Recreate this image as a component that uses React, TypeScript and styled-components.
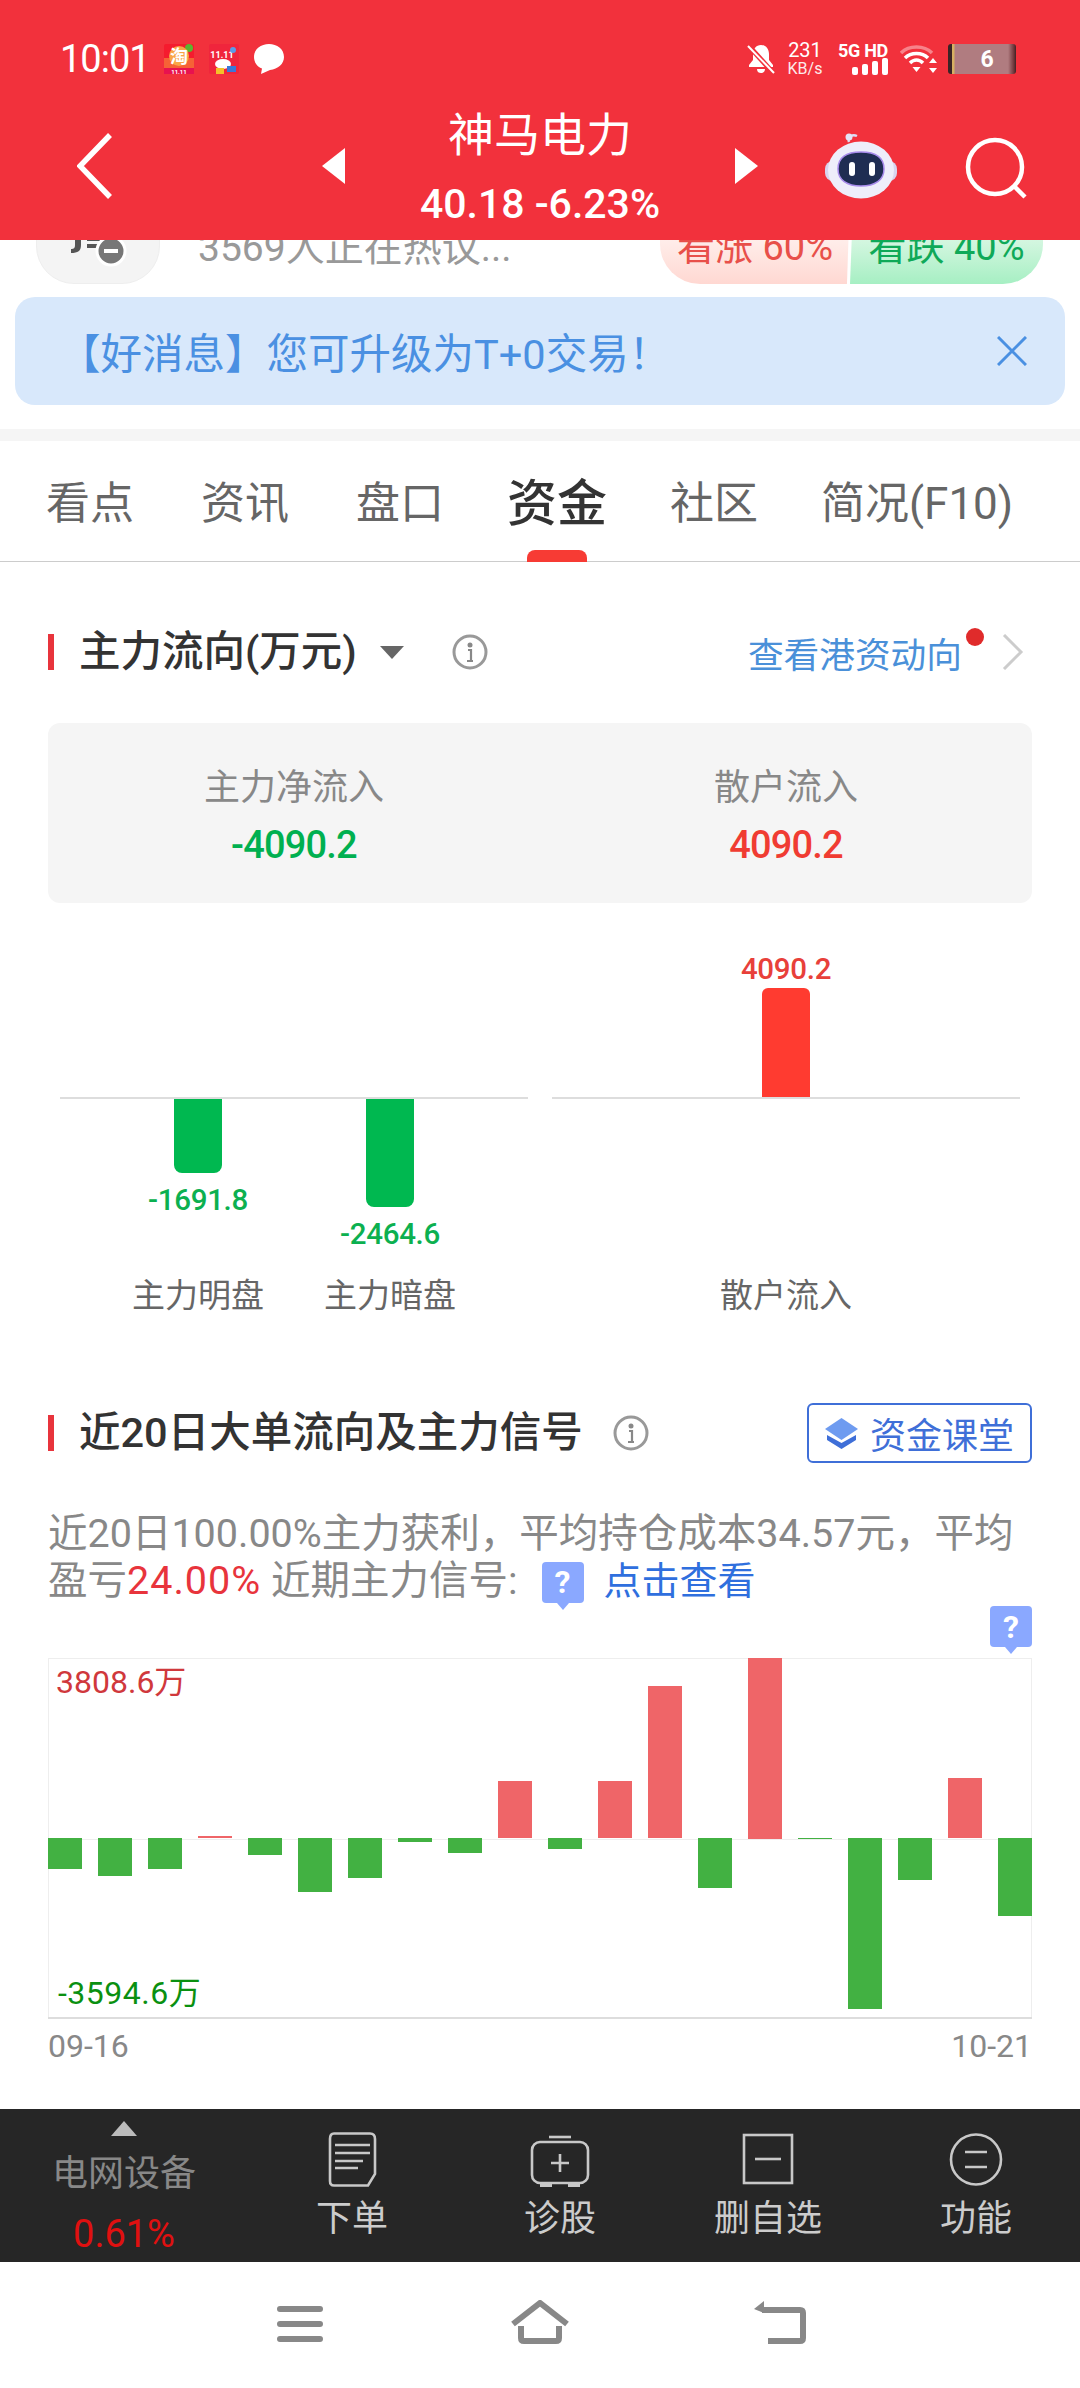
import React from "react";
import styled, { createGlobalStyle } from "styled-components";

const GlobalStyle = createGlobalStyle`
  html, body {
    margin: 0;
    padding: 0;
    background: #fff;
  }
  * {
    box-sizing: border-box;
  }
  body {
    font-family: Roboto, "Noto Sans CJK SC", sans-serif;
  }
`;

const Page = styled.div`
  width: 1080px;
  height: 2388px;
  display: flex;
  flex-direction: column;
  overflow: hidden;
  background: #fff;
`;

const Header = styled.header`
  height: 240px;
  flex: none;
  background: #f2313c;
  color: #fff;
`;

const StatusBar = styled.div`
  height: 118px;
  display: flex;
  align-items: center;
  padding: 0 64px 0 60px;
`;

const Clock = styled.span`
  font-size: 38px;
  letter-spacing: -1px;
  line-height: 40px;
  width: 104px;
`;

const StatusIcons = styled.div`
  display: flex;
  gap: 15px;
`;

const StatusRight = styled.div`
  margin-left: auto;
  display: flex;
  align-items: center;
`;

const Speed = styled.div`
  width: 34px;
  margin: 0 18px 0 13px;
  display: flex;
  flex-direction: column;
  align-items: center;
  font-size: 20px;
  line-height: 17px;
  small {
    font-size: 16px;
    line-height: 15px;
    margin-top: 2px;
    white-space: nowrap;
    opacity: 0.9;
  }
`;

const Net = styled.div`
  width: 48px;
  margin-right: 12px;
  display: flex;
  flex-direction: column;
  align-items: flex-end;
  font-size: 18px;
  font-weight: 700;
  line-height: 15px;
  white-space: nowrap;
  span {
    letter-spacing: -0.3px;
  }
`;

const Battery = styled.div`
  width: 68px;
  height: 30px;
  margin-left: 11px;
  border-radius: 3px;
  display: flex;
  align-items: center;
  justify-content: center;
  padding-left: 10px;
  font-size: 23px;
  font-weight: 700;
  background: linear-gradient(90deg, #3a2426 0, #3a2426 4px, #d7b062 4px, #d7b062 6px, #b07c80 7px, #b07c80 60px, #6d3438 66px, #3a2426 68px);
`;

const NavRow = styled.div`
  height: 122px;
  display: flex;
  align-items: center;
  padding: 0 0 26px 77px;
`;

const BackButton = styled.svg`
  width: 36px;
  height: 66px;
  margin-right: 209px;
`;

const Arrow = styled.i<{ $dir: "left" | "right" }>`
  width: 0;
  height: 0;
  flex: none;
  border-top: 18px solid transparent;
  border-bottom: 18px solid transparent;
  ${(p) => (p.$dir === "left" ? "border-right: 23px solid #fff;" : "border-left: 23px solid #fff;")}
`;

const Ticker = styled.div`
  width: 390px;
  flex: none;
  display: flex;
  flex-direction: column;
  align-items: center;
  gap: 20px;
  margin-top: 2px;
`;

const TickerName = styled.div`
  font-size: 46px;
  line-height: 54px;
  font-weight: 400;
`;

const TickerPrice = styled.div`
  font-size: 41px;
  line-height: 44px;
  font-weight: 500;
`;

const Robot = styled.div`
  width: 72px;
  height: 66px;
  margin-left: 67px;
  svg {
    display: block;
    width: 100%;
    height: 100%;
  }
`;

const SearchIcon = styled.svg`
  width: 62px;
  height: 62px;
  margin-left: 68px;
  margin-top: 4px;
`;

const PeekStrip = styled.div`
  height: 44px;
  flex: none;
  display: flex;
  align-items: flex-end;
  padding: 0 37px 0 36px;
  overflow: hidden;
`;

const PeekIcon = styled.div`
  width: 124px;
  height: 90px;
  flex: none;
  border-radius: 38px;
  background: #f4f4f4;
  border: 1px solid #eeeeee;
  display: flex;
  align-items: flex-end;
  justify-content: center;
  padding-bottom: 16px;
`;

const PeekText = styled.span`
  margin: 0 0 14px 38px;
  font-size: 39px;
  line-height: 44px;
  color: #999;
  white-space: nowrap;
`;

const Vote = styled.div`
  margin-left: auto;
  width: 383px;
  height: 90px;
  flex: none;
  display: flex;
  border-radius: 40px;
  overflow: hidden;
`;

const VoteSide = styled.div<{ $up?: boolean }>`
  height: 100%;
  display: flex;
  align-items: center;
  justify-content: center;
  padding-top: 8px;
  font-size: 38px;
  white-space: nowrap;
  ${(p) =>
    p.$up
      ? `width: 190px;
         color: #e8504a;
         background: linear-gradient(#fff2ef 40%, #ffd8d2);
         clip-path: polygon(0 0, 100% 0, 98.4% 100%, 0 100%);`
      : `width: 193px;
         color: #0fa958;
         background: linear-gradient(#dff8e7 40%, #a6efc3);
         clip-path: polygon(1.8% 0, 100% 0, 100% 100%, 0 100%);`}
`;

const Banner = styled.div`
  height: 108px;
  flex: none;
  margin: 13px 15px 0;
  border-radius: 20px;
  background: #d8e8fb;
  display: flex;
  align-items: center;
  justify-content: space-between;
  padding: 0 38px 0 44px;
  color: #4a90e2;
  font-size: 41.5px;
`;

const GrayBand = styled.div`
  height: 12px;
  flex: none;
  margin-top: 24px;
  background: #f5f5f5;
`;

const Tabs = styled.nav`
  height: 121px;
  flex: none;
  display: flex;
  align-items: center;
  gap: 67px;
  padding: 5px 0 0 46px;
  border-bottom: 1px solid #ccc;
  font-size: 44px;
  color: #666;
`;

const Tab = styled.span<{ $active?: boolean }>`
  position: relative;
  line-height: 50px;
  white-space: nowrap;
  &:last-child {
    margin-left: -4px;
  }
  ${(p) =>
    p.$active &&
    `font-size: 50px;
     font-weight: 500;
     color: #333;
     margin: 0 -4px;
     &::after {
       content: "";
       position: absolute;
       left: 50%;
       bottom: -33px;
       width: 60px;
       height: 12px;
       margin-left: -30px;
       border-radius: 8px 8px 0 0;
       background: #f73b34;
     }`}
`;

const Body = styled.main`
  flex: 1;
  padding: 0 48px;
`;

const SectionHead = styled.div<{ $first?: boolean }>`
  height: 60px;
  display: flex;
  align-items: center;
  margin-top: ${(p) => (p.$first ? "60px" : "85px")};
`;

const Mark = styled.i`
  width: 6px;
  height: 36px;
  flex: none;
  background: #e8343c;
  margin-right: 25px;
`;

const SectionTitle = styled.h2`
  margin: 0;
  font-size: 41.5px;
  line-height: 50px;
  font-weight: 500;
  color: #333;
  white-space: nowrap;
`;

const Caret = styled.i`
  width: 0;
  height: 0;
  margin-left: 23px;
  border-left: 12px solid transparent;
  border-right: 12px solid transparent;
  border-top: 13px solid #666;
`;

const InfoIcon = styled.svg<{ $gap: number }>`
  width: 36px;
  height: 36px;
  flex: none;
  margin-left: ${(p) => p.$gap}px;
`;

const MoreLink = styled.a`
  margin-left: auto;
  position: relative;
  display: flex;
  align-items: center;
  font-size: 35.7px;
  color: #4a90d9;
  white-space: nowrap;
  padding-right: 8px;
  &::after {
    content: "";
    position: absolute;
    right: -14px;
    top: 1px;
    width: 18px;
    height: 18px;
    border-radius: 50%;
    background: #e02b2b;
  }
`;

const Chevron = styled.svg`
  width: 22px;
  height: 36px;
  margin: 0 8px 0 32px;
`;

const StatsBox = styled.div`
  height: 180px;
  margin-top: 41px;
  border-radius: 12px;
  background: #f5f5f5;
  display: grid;
  grid-template-columns: 492px 492px;
  padding-top: 43px;
`;

const Stat = styled.div`
  display: flex;
  flex-direction: column;
  align-items: center;
`;

const StatLabel = styled.span`
  font-size: 36px;
  line-height: 44px;
  color: #888;
`;

const StatValue = styled.span<{ $up?: boolean }>`
  margin-top: 13px;
  font-size: 38px;
  line-height: 44px;
  font-weight: 500;
  letter-spacing: -0.8px;
  color: ${(p) => (p.$up ? "#f03c32" : "#00b050")};
`;

const FlowCharts = styled.div`
  margin: 51px 12px 0;
  display: grid;
  grid-template-columns: 468px 468px;
  gap: 24px;
`;

const FlowPanel = styled.div<{ $cols: number }>`
  display: grid;
  grid-template-columns: repeat(${(p) => p.$cols}, 192px);
  grid-template-rows: 143px 2px 175px 44px;
  justify-content: center;
`;

const FlowRule = styled.div`
  grid-column: 1 / -1;
  width: 468px;
  justify-self: center;
  background: #ddd;
`;

const FlowUp = styled.div`
  display: flex;
  flex-direction: column;
  justify-content: flex-end;
  align-items: center;
`;

const FlowDown = styled.div`
  display: flex;
  flex-direction: column;
  align-items: center;
`;

const FlowBar = styled.div<{ $up?: boolean; $h: number }>`
  width: 48px;
  height: ${(p) => p.$h}px;
  background: ${(p) => (p.$up ? "#ff3b30" : "#00b850")};
  border-radius: ${(p) => (p.$up ? "6px 6px 0 0" : "0 0 8px 8px")};
`;

const FlowValue = styled.span<{ $up?: boolean }>`
  font-size: 29.5px;
  line-height: 30px;
  font-weight: 500;
  letter-spacing: -0.3px;
  color: ${(p) => (p.$up ? "#e8403a" : "#0cb050")};
  margin: ${(p) => (p.$up ? "0 0 4px" : "12px 0 0")};
`;

const FlowName = styled.span`
  text-align: center;
  font-size: 33px;
  line-height: 44px;
  color: #666;
`;

const CourseButton = styled.a`
  margin-left: auto;
  width: 225px;
  height: 60px;
  display: flex;
  align-items: center;
  justify-content: center;
  gap: 12px;
  border: 2px solid #3f6fd8;
  border-radius: 6px;
  color: #3f6fd8;
  font-size: 36px;
  white-space: nowrap;
`;

const Summary = styled.p`
  margin: 47px 0 0;
  font-size: 39.5px;
  line-height: 47px;
  color: #888;
  white-space: nowrap;
  em {
    font-style: normal;
    color: #e8343c;
    letter-spacing: 1px;
  }
  a {
    color: #2f6fde;
    font-size: 38px;
  }
`;

const QuestionFlag = styled.span<{ $inline?: boolean }>`
  position: relative;
  display: inline-flex;
  align-items: center;
  justify-content: center;
  width: 42px;
  height: 41px;
  border-radius: 4px;
  background: #8aa8ff;
  color: #fff;
  font-size: 32px;
  font-weight: 700;
  line-height: 1;
  ${(p) => p.$inline && "margin: 0 20px 0 24px; vertical-align: 1px;"}
  &::after {
    content: "";
    position: absolute;
    left: 50%;
    bottom: -7px;
    margin-left: -6px;
    border-left: 6px solid transparent;
    border-right: 6px solid transparent;
    border-top: 7px solid #8aa8ff;
  }
`;

const FlagRow = styled.div`
  height: 52px;
  margin-top: 1px;
  display: flex;
  justify-content: flex-end;
`;

const SignalChart = styled.div`
  position: relative;
  height: 361px;
  display: flex;
  justify-content: space-between;
  border-top: 1px solid #eee;
  border-bottom: 2px solid #ddd;
  box-shadow: inset 1px 0 #eee, inset -1px 0 #eee;
  &::before {
    content: "";
    position: absolute;
    left: 0;
    right: 0;
    top: 180px;
    height: 1px;
    background: #eee;
  }
`;

const SignalColumn = styled.div`
  position: relative;
  width: 34px;
  display: flex;
  flex-direction: column;
`;

const SignalHalf = styled.div<{ $up?: boolean }>`
  height: 180px;
  display: flex;
  align-items: ${(p) => (p.$up ? "flex-end" : "flex-start")};
`;

const SignalBar = styled.div<{ $up?: boolean }>`
  width: 100%;
  background: ${(p) => (p.$up ? "#ef6568" : "#42b142")};
`;

const ChartLabel = styled.span<{ $up?: boolean }>`
  position: absolute;
  white-space: nowrap;
  font-size: 32px;
  line-height: 34px;
  ${(p) =>
    p.$up
      ? "left: 8px; top: 6px; color: #d0383c;"
      : "left: 10px; bottom: 7px; color: #0a9010; letter-spacing: 0.5px;"}
`;

const DateRow = styled.div`
  margin-top: 9px;
  display: flex;
  justify-content: space-between;
  font-size: 32px;
  line-height: 36px;
  color: #888;
`;

const Dock = styled.div`
  height: 153px;
  flex: none;
  background: #262626;
  display: grid;
  grid-template-columns: 248px repeat(4, 208px);
`;

const SectorCell = styled.div`
  display: flex;
  flex-direction: column;
  align-items: center;
  padding-top: 12px;
`;

const SectorArrow = styled.i`
  width: 0;
  height: 0;
  border-left: 13px solid transparent;
  border-right: 13px solid transparent;
  border-bottom: 15px solid #bbb;
`;

const SectorName = styled.span`
  margin-top: 16px;
  font-size: 36px;
  line-height: 44px;
  color: #888;
`;

const SectorChange = styled.span`
  margin-top: 16px;
  font-size: 38px;
  line-height: 44px;
  color: #e01010;
`;

const DockAction = styled.div`
  display: flex;
  flex-direction: column;
  align-items: center;
  padding-top: 23px;
  color: #ccc;
  font-size: 36px;
  line-height: 40px;
  svg {
    width: 60px;
    height: 55px;
    margin-bottom: 12px;
    fill: none;
    stroke: #c8c8c8;
    stroke-width: 2.6;
  }
`;

const SystemNav = styled.div`
  height: 126px;
  flex: none;
  display: grid;
  grid-template-columns: repeat(3, 240px);
  justify-content: center;
  padding-top: 38px;
  svg {
    justify-self: center;
    width: 60px;
    height: 44px;
    fill: none;
    stroke: #888;
    stroke-width: 6;
  }
`;

const bars = [
  -31, -38, -31, 2, -17, -54, -40, -4, -15, 57, -11, 57, 152, -50, 181, -1, -171, -42, 60, -78,
];

function TaoIcon() {
  return (
    <svg width="30" height="30" viewBox="0 0 30 30">
      <rect width="30" height="30" rx="2" fill="#f51b2e" />
      <rect y="14" width="30" height="10" fill="#f7803a" opacity=".7" />
      <circle cx="25" cy="4" r="4" fill="#5cb531" />
      <circle cx="15" cy="12" r="10" fill="#f9a546" />
      <text x="15" y="19" textAnchor="middle" fontSize="18" fontWeight="700" fill="#fff">淘</text>
      <rect y="24" width="30" height="6" fill="#e8124f" />
      <text x="15" y="29.5" textAnchor="middle" fontSize="6" fontWeight="700" fill="#fff">11.11</text>
    </svg>
  );
}

function RabbitIcon() {
  return (
    <svg width="30" height="30" viewBox="0 0 30 30">
      <rect width="30" height="30" rx="2" fill="#f0253c" />
      <text x="13" y="14" textAnchor="middle" fontSize="9" fontWeight="700" fill="#fff">11.11</text>
      <ellipse cx="14" cy="20" rx="8" ry="5" fill="#fff" />
      <circle cx="24" cy="6" r="3" fill="#5a9be8" />
      <rect x="7" y="24" width="8" height="6" fill="#f5c02a" />
      <rect x="18" y="22" width="9" height="6" fill="#3a78d8" />
    </svg>
  );
}

function ChatIcon() {
  return (
    <svg width="30" height="30" viewBox="0 0 30 30">
      <path d="M15 0C23 0 30 5 30 13c0 7-6 12-14 13l-9 4 1-5.500C3 23 0 18 0 13 0 5 7 0 15 0Z" fill="#fff" />
    </svg>
  );
}

function BellOffIcon() {
  return (
    <svg width="28" height="30" viewBox="0 0 28 30">
      <path d="M14 1c5 0 8 4 8 9v6l4 5v2H2v-2l4-5v-6c0-5 3-9 8-9Z M10 25h8c0 3-2 4-4 4s-4-1-4-4Z" fill="#fff" />
      <path d="M1 1 L27 30" stroke="#f2313c" strokeWidth="5" />
      <path d="M1 2 L27 29" stroke="#fff" strokeWidth="2" />
    </svg>
  );
}

function SignalIcon() {
  return (
    <svg width="36" height="17" viewBox="0 0 36 17" fill="#fff">
      <rect x="0" y="9" width="6" height="8" rx="2" />
      <rect x="10" y="6" width="6" height="11" rx="2" />
      <rect x="20" y="3" width="6" height="14" rx="2" />
      <rect x="30" y="0" width="6" height="17" rx="2" />
    </svg>
  );
}

function WifiIcon() {
  return (
    <svg width="37" height="30" viewBox="0 0 37 30" fill="none" stroke="#fff">
      <path d="M1 9C9 1 24 1 32 9" stroke="#fff" strokeOpacity=".4" strokeWidth="3.500" />
      <path d="M5 14C11 8 22 8 28 14" strokeWidth="3.500" />
      <path d="M10 19C14 15 19 15 23 19" strokeWidth="3.500" />
      <path d="M12.500 23h8l-4 5Z" fill="#fff" stroke="none" />
      <path d="M33 14l4 5h-8Z M33 29l-4-5h8Z" fill="#fff" stroke="none" />
    </svg>
  );
}

function RobotFace() {
  return (
    <svg viewBox="0 0 72 66">
      <path d="M24 9C22 3 28 1 32 3" fill="none" stroke="#dcdcf4" strokeWidth="2.500" />
      <circle cx="24" cy="4" r="3.500" fill="#e4e4f6" />
      <rect x="0" y="28" width="72" height="20" rx="8" fill="#d8d4ee" />
      <ellipse cx="36" cy="37" rx="33" ry="28.500" fill="#eeeefa" />
      <path d="M36 19c15 0 23 6 23 17 0 11-9 17-23 17S13 47 13 36c0-11 8-17 23-17Z" fill="#1f2d52" stroke="#a78bea" strokeWidth="1.500" />
      <rect x="24" y="29" width="6" height="14" rx="3" fill="#fff" />
      <rect x="44" y="29" width="6" height="14" rx="3" fill="#fff" />
    </svg>
  );
}

function CourseIcon() {
  return (
    <svg width="33" height="31" viewBox="0 0 33 31">
      <path d="M2 17l14.500 8L31 17v5L16.500 31 2 22Z" fill="#3f6fd8" />
      <path d="M16.500 0L33 11 16.500 22 0 11Z" fill="#6e9bf0" />
    </svg>
  );
}

function Info({ gap }: { gap: number }) {
  return (
    <InfoIcon $gap={gap} viewBox="0 0 36 36">
      <circle cx="18" cy="18" r="16" fill="none" stroke="#999" strokeWidth="3" />
      <circle cx="18" cy="11" r="2.500" fill="#888" />
      <path d="M16 16h3v11M15 27h6" fill="none" stroke="#888" strokeWidth="2.200" />
    </InfoIcon>
  );
}

export default function App() {
  return (
    <Page>
      <GlobalStyle />
      <Header>
        <StatusBar>
          <Clock>10:01</Clock>
          <StatusIcons>
            <TaoIcon />
            <RabbitIcon />
            <ChatIcon />
          </StatusIcons>
          <StatusRight>
            <BellOffIcon />
            <Speed>
              231
              <small>KB/s</small>
            </Speed>
            <Net>
              <span>5G HD</span>
              <SignalIcon />
            </Net>
            <WifiIcon />
            <Battery>6</Battery>
          </StatusRight>
        </StatusBar>
        <NavRow>
          <BackButton viewBox="0 0 36 66" fill="none" stroke="#fff" strokeWidth="5.500">
            <path d="M33 2 L3 33 L33 64" />
          </BackButton>
          <Arrow $dir="left" />
          <Ticker>
            <TickerName>神马电力</TickerName>
            <TickerPrice>40.18 -6.23%</TickerPrice>
          </Ticker>
          <Arrow $dir="right" />
          <Robot>
            <RobotFace />
          </Robot>
          <SearchIcon viewBox="0 0 62 62" fill="none" stroke="#fff" strokeWidth="4.500">
            <circle cx="30" cy="30" r="27" />
            <path d="M50 50 L60 60" />
          </SearchIcon>
        </NavRow>
      </Header>

      <PeekStrip>
        <PeekIcon>
          <svg width="58" height="36" viewBox="0 0 58 36">
            <path d="M2 0h10v14c0 6-3 8-10 8v-4c3 0 4-1 4-4V4H2Z M18 6h14v4H18Z M18 13h12v4H18Z" fill="#555" />
            <circle cx="42" cy="20" r="14" fill="#777" stroke="#fff" strokeWidth="3" />
            <rect x="35" y="18" width="14" height="4" fill="#fff" />
          </svg>
        </PeekIcon>
        <PeekText>3569人正在热议...</PeekText>
        <Vote>
          <VoteSide $up>看涨 60%</VoteSide>
          <VoteSide>看跌 40%</VoteSide>
        </Vote>
      </PeekStrip>

      <Banner>
        <span>【好消息】您可升级为T+0交易！</span>
        <svg width="30" height="30" viewBox="0 0 30 30" stroke="#4a90e2" strokeWidth="3">
          <path d="M1 1 L29 29 M29 1 L1 29" />
        </svg>
      </Banner>

      <GrayBand />

      <Tabs>
        <Tab>看点</Tab>
        <Tab>资讯</Tab>
        <Tab>盘口</Tab>
        <Tab $active>资金</Tab>
        <Tab>社区</Tab>
        <Tab>简况(F10)</Tab>
      </Tabs>

      <Body>
        <SectionHead $first>
          <Mark />
          <SectionTitle>主力流向(万元)</SectionTitle>
          <Caret />
          <Info gap={48} />
          <MoreLink>查看港资动向</MoreLink>
          <Chevron viewBox="0 0 22 36" fill="none" stroke="#ccc" strokeWidth="3">
            <path d="M2 1 L19 18 L2 35" />
          </Chevron>
        </SectionHead>

        <StatsBox>
          <Stat>
            <StatLabel>主力净流入</StatLabel>
            <StatValue>-4090.2</StatValue>
          </Stat>
          <Stat>
            <StatLabel>散户流入</StatLabel>
            <StatValue $up>4090.2</StatValue>
          </Stat>
        </StatsBox>

        <FlowCharts>
          <FlowPanel $cols={2}>
            <FlowUp />
            <FlowUp />
            <FlowRule />
            <FlowDown>
              <FlowBar $h={74} />
              <FlowValue>-1691.8</FlowValue>
            </FlowDown>
            <FlowDown>
              <FlowBar $h={108} />
              <FlowValue>-2464.6</FlowValue>
            </FlowDown>
            <FlowName>主力明盘</FlowName>
            <FlowName>主力暗盘</FlowName>
          </FlowPanel>
          <FlowPanel $cols={1}>
            <FlowUp>
              <FlowValue $up>4090.2</FlowValue>
              <FlowBar $up $h={109} />
            </FlowUp>
            <FlowRule />
            <FlowDown />
            <FlowName>散户流入</FlowName>
          </FlowPanel>
        </FlowCharts>

        <SectionHead>
          <Mark />
          <SectionTitle>近20日大单流向及主力信号</SectionTitle>
          <Info gap={30} />
          <CourseButton>
            <CourseIcon />
            资金课堂
          </CourseButton>
        </SectionHead>

        <Summary>
          近20日100.00%主力获利，平均持仓成本34.57元，平均
          <br />
          盈亏<em>24.00%</em> 近期主力信号:
          <QuestionFlag $inline>?</QuestionFlag>
          <a>点击查看</a>
        </Summary>

        <FlagRow>
          <QuestionFlag>?</QuestionFlag>
        </FlagRow>

        <SignalChart>
          <ChartLabel $up>3808.6万</ChartLabel>
          <ChartLabel>-3594.6万</ChartLabel>
          {bars.map((v, i) => (
            <SignalColumn key={i}>
              <SignalHalf $up>{v > 0 && <SignalBar $up style={{ height: v }} />}</SignalHalf>
              <SignalHalf>{v < 0 && <SignalBar style={{ height: -v }} />}</SignalHalf>
            </SignalColumn>
          ))}
        </SignalChart>

        <DateRow>
          <span>09-16</span>
          <span>10-21</span>
        </DateRow>
      </Body>

      <Dock>
        <SectorCell>
          <SectorArrow />
          <SectorName>电网设备</SectorName>
          <SectorChange>0.61%</SectorChange>
        </SectorCell>
        <DockAction>
          <svg viewBox="0 0 60 55">
            <path d="M12 1.500H48Q53 1.500 53 7V42L46 53.500H12Q8 53.500 8 49V7Q8 1.500 12 1.500Z" />
            <path d="M13 13H48M13 21H48M13 29H41M13 36H36" />
          </svg>
          下单
        </DockAction>
        <DockAction>
          <svg viewBox="0 0 60 55">
            <path d="M19 5H41" />
            <rect x="2" y="10" width="56" height="41" rx="8" />
            <path d="M21 31H39M30 22V40" />
            <path d="M10 53H22M38 53H50" strokeWidth="4" />
          </svg>
          诊股
        </DockAction>
        <DockAction>
          <svg viewBox="0 0 60 55">
            <rect x="6" y="3" width="48" height="48" />
            <path d="M17 27H43" />
          </svg>
          删自选
        </DockAction>
        <DockAction>
          <svg viewBox="0 0 60 55">
            <circle cx="30" cy="27.500" r="25" />
            <path d="M19 20H41M19 35H41" />
          </svg>
          功能
        </DockAction>
      </Dock>

      <SystemNav>
        <svg viewBox="0 0 60 44">
          <path d="M10 9H50M10 24H50M10 39H50" strokeLinecap="round" />
        </svg>
        <svg viewBox="0 0 60 44">
          <path d="M3 24 L30 3 L57 24" />
          <path d="M11 26V38Q11 41 14 41H46Q49 41 49 38V26" />
        </svg>
        <svg viewBox="0 0 60 44">
          <path d="M12 10H50Q53 10 53 13V38Q53 41 50 41H18" />
          <path d="M4 9L14 1V13Z" fill="#888" stroke="none" />
        </svg>
      </SystemNav>
    </Page>
  );
}
